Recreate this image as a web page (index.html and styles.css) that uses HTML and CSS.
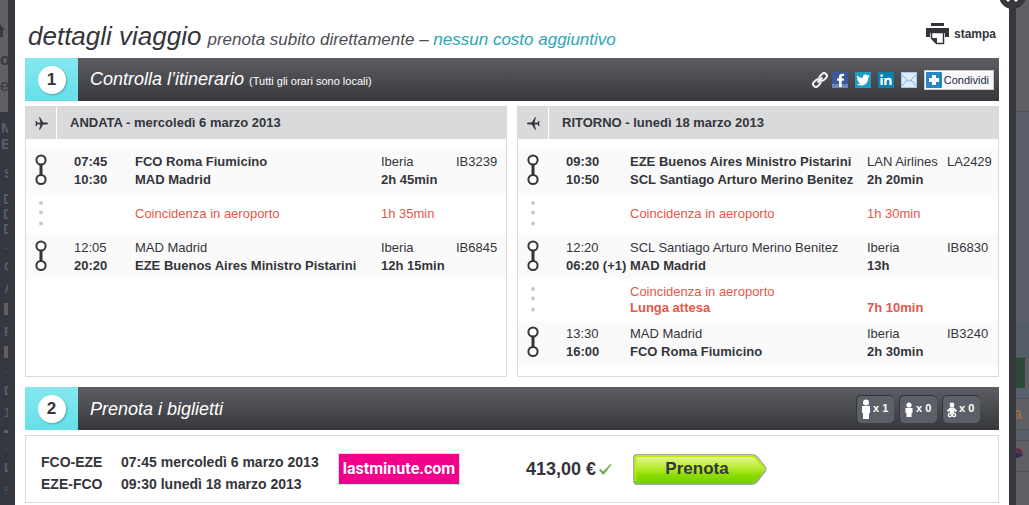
FILE: index.html
```
<!DOCTYPE html>
<html lang="it">
<head>
    <meta charset="UTF-8">
    <title>Dettagli viaggio</title>
    <link rel="stylesheet" href="styles.css">
</head>
<body>
<!-- shared icons -->
<svg class="defs" aria-hidden="true">
    <symbol id="leg" viewBox="0 0 12 32">
        <path d="M6 10v11" stroke="#34353b" stroke-width="3"/>
        <circle cx="6" cy="6" r="4.600" fill="#fff" stroke="#34353b" stroke-width="2"/>
        <circle cx="6" cy="25.500" r="4.600" fill="#fff" stroke="#34353b" stroke-width="2"/>
    </symbol>
    <symbol id="dots" viewBox="0 0 12 32">
        <g fill="#c9c9cb"><circle cx="6" cy="5" r="2"/><circle cx="6" cy="14.500" r="2"/><circle cx="6" cy="25.500" r="2"/></g>
    </symbol>
    <symbol id="plane" viewBox="0 0 13 13">
        <path d="M13 6.500c0-.5-.8-.9-2-.9H8.200L5 .3H4l1.500 5.300-2.800.2L1.300 4H.3l.7 2.500L.3 9h1l1.400-1.800 2.800.2L4 12.700h1l3.200-5.300H11c1.200 0 2-.4 2-.9z" fill="#34353b"/>
    </symbol>
</svg>

<div class="page">
    <div class="behind left">
        <div class="behind-top">
            <svg width="6" height="13" viewBox="0 0 6 13"><path d="M0 0l5 6H3v7H0z" fill="#38393f"/></svg>
            <b>o</b>
            <span>e</span>
        </div>
        <div class="behind-menu">
            <b class="name">M</b>
            <b class="name">E</b>
            <b class="head">S</b>
            <i class="check"></i>
            <i class="check"></i>
            <i class="check"></i>
            <hr>
            <b>C</b>
            <b>A</b>
            <i class="field"></i>
            <b>F</b>
            <i class="field"></i>
            <hr>
            <b>D</b>
            <b>1</b>
            <i class="slider"></i>
            <hr>
            <b>L</b>
            <span class="more">s</span>
        </div>
    </div>

    <div class="modal">
        <button class="close" aria-label="Chiudi">
            <svg width="12" height="12" viewBox="0 0 12 12"><path d="M1 1l10 10M11 1L1 11" stroke="#fff" stroke-width="3"/></svg>
        </button>

        <div class="top">
            <h1>dettagli viaggio</h1>
            <p>prenota subito direttamente – <em>nessun costo aggiuntivo</em></p>
            <a href="#" class="print">
                <svg width="23" height="22" viewBox="0 0 23 22">
                    <path d="M5 0h13v3H5zM0 5h23v9h-4v-4H4v4H0z" fill="#34353b"/>
                    <path d="M5.500 9.500h12v11h-7l-5-5z" fill="#fff" stroke="#34353b" stroke-width="1.500"/>
                    <path d="M5 15h6v6z" fill="#34353b"/>
                </svg>
                stampa
            </a>
        </div>

        <div class="bar">
            <div class="step"><span>1</span></div>
            <h2>Controlla l’itinerario <small>(Tutti gli orari sono locali)</small></h2>
            <div class="share">
                <a href="#" aria-label="Link">
                    <svg width="16" height="16" viewBox="0 0 16 16" fill="none" stroke="#f2f2f2" stroke-width="2">
                        <rect x="7.200" y="2" width="8" height="5.600" rx="2.800" transform="rotate(-45 11.200 4.800)"/>
                        <rect x=".8" y="8.400" width="8" height="5.600" rx="2.800" transform="rotate(-45 4.800 11.200)"/>
                        <path d="M5.500 10.500l5-5"/>
                    </svg>
                </a>
                <a href="#" aria-label="Facebook">
                    <svg width="16" height="16" viewBox="0 0 16 16">
                        <rect width="16" height="16" fill="#3b5a9b"/>
                        <path d="M0 12h16v4H0z" fill="#6d86bb"/>
                        <path d="M7 15V8.800H5V6.400h2V5c0-2.200 1.200-3.300 3.200-3.300H12V4h-1.200c-.8 0-1.100.4-1.100 1.100v1.300H12l-.3 2.400h-2V15z" fill="#fff"/>
                    </svg>
                </a>
                <a href="#" aria-label="Twitter">
                    <svg width="16" height="16" viewBox="0 0 16 16">
                        <rect width="16" height="16" fill="#1f9cc4"/>
                        <path d="M2 3.200c1.500 1.700 3.400 2.700 5.800 2.800C7.400 4 8.700 2.500 10.400 2.500c.8 0 1.500.3 2 .9l1.900-.7-1 1.700 1.500-.3-1.500 1.600c.1 4.500-3.100 7.800-7.300 7.800-1.700 0-3.200-.5-4.400-1.200 1.600.1 2.900-.3 3.900-1.100-1.300-.1-2.100-.8-2.500-1.900h1.100C2.800 8.900 2 7.900 2 6.400l1.200.4C2 5.900 1.700 4.500 2 3.200z" fill="#fff"/>
                    </svg>
                </a>
                <a href="#" aria-label="LinkedIn">
                    <svg width="16" height="16" viewBox="0 0 16 16">
                        <rect width="16" height="16" fill="#0d82b0"/>
                        <path d="M2.500 6h2.300v7H2.500zM2.500 2.500h2.300v2.200H2.500zM6.300 6h2.200v1c.5-.8 1.200-1.200 2.300-1.200 2 0 2.900 1.200 2.900 3.300V13h-2.300V9.400c0-1-.4-1.600-1.200-1.600-1 0-1.600.7-1.600 1.700V13H6.300z" fill="#fff"/>
                    </svg>
                </a>
                <a href="#" aria-label="Email">
                    <svg width="16" height="16" viewBox="0 0 16 16">
                        <rect x=".5" y=".5" width="15" height="15" fill="#dcecfb" stroke="#a3c6ee"/>
                        <path d="M1 3l7 6.500L15 3M1 14l5-6M15 14l-5-6" fill="none" stroke="#7dabdf"/>
                    </svg>
                </a>
                <button class="share-all">
                    <svg width="16" height="16" viewBox="0 0 16 16">
                        <rect width="16" height="16" rx="1" fill="#2186c1"/>
                        <path d="M6 3h4v3h3v4h-3v3H6v-3H3V6h3z" fill="#fff"/>
                    </svg>
                    Condividi
                </button>
            </div>
        </div>

        <div class="flights">
            <div class="flight">
                <h3><span class="plane"><svg width="13" height="13"><use href="#plane"/></svg></span>ANDATA - mercoledì 6 marzo 2013</h3>
                <table>
                    <colgroup><col class="c-icon"><col class="c-time"><col><col class="c-line"><col class="c-code"></colgroup>
                    <tbody class="leg">
                        <tr>
                            <td rowspan="2" class="mark"><svg width="12" height="32"><use href="#leg"/></svg></td>
                            <td class="b">07:45</td><td class="b">FCO Roma Fiumicino</td><td>Iberia</td><td>IB3239</td>
                        </tr>
                        <tr class="b"><td>10:30</td><td>MAD Madrid</td><td>2h 45min</td><td></td></tr>
                    </tbody>
                    <tbody class="wait">
                        <tr>
                            <td class="mark"><svg width="12" height="32"><use href="#dots"/></svg></td>
                            <td></td><td>Coincidenza in aeroporto</td><td>1h 35min</td><td></td>
                        </tr>
                    </tbody>
                    <tbody class="leg">
                        <tr>
                            <td rowspan="2" class="mark"><svg width="12" height="32"><use href="#leg"/></svg></td>
                            <td>12:05</td><td>MAD Madrid</td><td>Iberia</td><td>IB6845</td>
                        </tr>
                        <tr class="b"><td>20:20</td><td>EZE Buenos Aires Ministro Pistarini</td><td>12h 15min</td><td></td></tr>
                    </tbody>
                </table>
            </div>

            <div class="flight back">
                <h3><span class="plane"><svg width="13" height="13"><use href="#plane"/></svg></span>RITORNO - lunedì 18 marzo 2013</h3>
                <table>
                    <colgroup><col class="c-icon"><col class="c-time"><col><col class="c-line"><col class="c-code"></colgroup>
                    <tbody class="leg">
                        <tr>
                            <td rowspan="2" class="mark"><svg width="12" height="32"><use href="#leg"/></svg></td>
                            <td class="b">09:30</td><td class="b">EZE Buenos Aires Ministro Pistarini</td><td>LAN Airlines</td><td>LA2429</td>
                        </tr>
                        <tr class="b"><td>10:50</td><td>SCL Santiago Arturo Merino Benitez</td><td>2h 20min</td><td></td></tr>
                    </tbody>
                    <tbody class="wait">
                        <tr>
                            <td class="mark"><svg width="12" height="32"><use href="#dots"/></svg></td>
                            <td></td><td>Coincidenza in aeroporto</td><td>1h 30min</td><td></td>
                        </tr>
                    </tbody>
                    <tbody class="leg">
                        <tr>
                            <td rowspan="2" class="mark"><svg width="12" height="32"><use href="#leg"/></svg></td>
                            <td>12:20</td><td>SCL Santiago Arturo Merino Benitez</td><td>Iberia</td><td>IB6830</td>
                        </tr>
                        <tr class="b"><td>06:20 (+1)</td><td>MAD Madrid</td><td>13h</td><td></td></tr>
                    </tbody>
                    <tbody class="wait">
                        <tr>
                            <td class="mark"><svg width="12" height="32"><use href="#dots"/></svg></td>
                            <td></td><td>Coincidenza in aeroporto<br><b>Lunga attesa</b></td><td><br><b>7h 10min</b></td><td></td>
                        </tr>
                    </tbody>
                    <tbody class="leg">
                        <tr>
                            <td rowspan="2" class="mark"><svg width="12" height="32"><use href="#leg"/></svg></td>
                            <td>13:30</td><td>MAD Madrid</td><td>Iberia</td><td>IB3240</td>
                        </tr>
                        <tr class="b"><td>16:00</td><td>FCO Roma Fiumicino</td><td>2h 30min</td><td></td></tr>
                    </tbody>
                </table>
            </div>
        </div>

        <div class="bar">
            <div class="step"><span>2</span></div>
            <h2>Prenota i biglietti</h2>
            <ul class="people">
                <li>
                    <svg width="10" height="20" viewBox="0 0 10 20" fill="#fff"><circle cx="5" cy="3.500" r="3"/><path d="M1 7h8v7H8v6H2v-6H1z"/></svg>
                    <span>x 1</span>
                </li>
                <li>
                    <svg width="10" height="20" viewBox="0 0 10 20" fill="#fff"><circle cx="5" cy="6" r="2.600"/><path d="M1.500 9h7v5h-1v4h-5v-4h-1z"/></svg>
                    <span>x 0</span>
                </li>
                <li>
                    <svg width="10" height="20" viewBox="0 0 10 20" fill="#fff"><circle cx="5" cy="6" r="2.400"/><path d="M3 8.500h4l3 3-1 1.500-2-1v2H3v-2l-2 1-1-1.500z"/><circle cx="3" cy="16" r="1.600" fill="none" stroke="#fff" stroke-width="1.400"/><circle cx="7" cy="16" r="1.600" fill="none" stroke="#fff" stroke-width="1.400"/></svg>
                    <span>x 0</span>
                </li>
            </ul>
        </div>

        <div class="ticket">
            <dl>
                <dt>FCO-EZE</dt><dd>07:45 mercoledì 6 marzo 2013</dd>
                <dt>EZE-FCO</dt><dd>09:30 lunedì 18 marzo 2013</dd>
            </dl>
            <div class="seller"><span>lastminute.com</span></div>
            <div class="price">
                413,00 €
                <svg width="13" height="11" viewBox="0 0 13 11"><path d="M0 6l2-1 2 2.500L11.500 0l1 .5L5 10.500H3.500z" fill="#73b04e"/></svg>
            </div>
            <button class="book">
                <svg width="134" height="31" viewBox="0 0 134 31" aria-hidden="true">
                    <linearGradient id="green" x2="0" y2="1">
                        <stop offset="0" stop-color="#e4f79a"/>
                        <stop offset=".45" stop-color="#b9ec30"/>
                        <stop offset=".7" stop-color="#8bdb00"/>
                        <stop offset="1" stop-color="#72cf00"/>
                    </linearGradient>
                    <path d="M4 .7h115q3 0 5 2l8 10q1.500 2.500 0 5l-8 10q-2 2.600-5 2.600H4q-3.300 0-3.300-3.300V4Q.7.7 4 .7z" fill="url(#green)" stroke="#a3a8ae" stroke-width="1.400"/>
                    <path d="M2.500 27V4q0-1.800 2-1.800H119q2.500 0 4 1.800l7 9" fill="none" stroke="#bfea00" stroke-width="1.800"/>
                </svg>
                <span>Prenota</span>
            </button>
        </div>
    </div>

    <div class="behind right">
        <div class="r-top"></div>
        <div class="r-blue"></div>
        <div class="r-slate"></div>
        <div class="r-green"></div>
        <div class="r-line"></div>
        <div class="r-row"><b>a</b></div>
        <div class="r-line"></div>
        <div class="r-row"><svg width="8" height="12" viewBox="0 0 8 12"><path d="M0 1q6 0 7 6L0 4z" fill="#6b2740"/><path d="M0 5l7 2q-2 4-7 4z" fill="#2a3158"/></svg></div>
    </div>
</div>
</body>
</html>
```
FILE: styles.css
```
body, h1, h2, h3, p, ul, dl, dd {
    margin: 0;
    padding: 0;
    list-style: none;
}

body {
    font: 13px/18px "Liberation Sans", Arial, sans-serif;
    color: #34353b;
    background: #5f5f64;
}

a {
    color: inherit;
    text-decoration: none;
}

button {
    font-family: inherit;
    color: inherit;
    cursor: pointer;
}

svg {
    display: block;
    flex: none;
}

.defs {
    position: absolute;
    width: 0;
    height: 0;
}

.b {
    font-weight: bold;
}

.page {
    display: flex;
    height: 100vh;
    overflow: hidden;
}

/* page under the overlay */
.behind {
    flex: none;
    overflow: hidden;
    display: flex;
    flex-direction: column;
}

.left {
    width: 8px;
}

.behind-top {
    box-sizing: border-box;
    height: 112px;
    flex: none;
    padding-top: 24px;
    background: #5f5f64;
    color: #38393f;
    font-size: 16px;
}

.behind-top b, .behind-top span {
    display: block;
    height: 26px;
    line-height: 46px;
}

.behind-menu {
    flex: 1;
    padding: 8px 0 0 4px;
    background: #353740;
    color: #5b5d65;
}

.behind-menu b, .behind-menu span, .behind-menu i {
    display: block;
    height: 16px;
    line-height: 16px;
    margin-bottom: 6px;
}

.behind-menu .name {
    margin: 0 0 0 -3px;
    font-size: 15px;
}

.behind-menu .head {
    margin: 14px 0 12px;
}

.behind-menu .check {
    box-sizing: border-box;
    width: 9px;
    height: 10px;
    margin-bottom: 5px;
    border: 2px solid #4c5d70;
}

.behind-menu .field {
    width: 6px;
    height: 12px;
    margin: 4px 0 9px;
    background: #5f5f64;
}

.behind-menu .slider {
    width: 6px;
    height: 3px;
    margin: 9px 0 16px;
    background: #5f5f64;
}

.behind-menu hr {
    margin: 14px 0 10px;
    border: 0;
    border-top: 1px solid #42444c;
}

.behind-menu .more {
    color: #365964;
}

.right {
    width: 13px;
}

.right div {
    box-sizing: border-box;
    flex: none;
    border-bottom: 1px solid #4f5057;
}

.right .r-top {
    height: 112px;
}

.right .r-blue {
    height: 211px;
    background: #5b5e68;
    border: 0;
}

.right .r-slate {
    height: 35px;
    background: #555d66;
}

.right .r-green {
    width: 9px;
    height: 30px;
    background: #2b4a3b;
    border: 0;
}

.right .r-line {
    height: 11px;
    background: #58616b;
}

.right .r-row {
    height: 31px;
    padding-top: 6px;
}

.r-row b {
    color: #93704c;
    font-size: 16px;
    margin-left: -3px;
}

.modal {
    position: relative;
    flex: 1;
    padding: 0 10px;
    background: #fff;
    border: solid #37383d;
    border-width: 0 7px;
}

.close {
    position: absolute;
    top: -18px;
    right: -17px;
    width: 27px;
    height: 27px;
    padding: 7px;
    border: 0;
    border-radius: 50%;
    background: #37383d;
}

.top {
    display: flex;
    align-items: baseline;
    height: 42px;
    padding: 16px 3px 0;
}

h1 {
    font: italic 26px/40px "Liberation Sans", Arial, sans-serif;
}

.top p {
    margin-left: 6px;
    font-size: 17px;
    font-style: italic;
    color: #4c4d54;
}

.top em {
    color: #2aa5b8;
}

.print {
    display: flex;
    align-items: center;
    gap: 5px;
    margin-left: auto;
    font-size: 12px;
    font-weight: bold;
}

.bar {
    display: flex;
    align-items: center;
    height: 43px;
    color: #fff;
    background: linear-gradient(#5d5e63, #37383c);
}

.step {
    display: flex;
    align-items: center;
    justify-content: center;
    width: 53px;
    height: 43px;
    background: linear-gradient(#86e8f0, #65dfe9);
}

.step span {
    width: 28px;
    height: 28px;
    border-radius: 50%;
    background: #fff;
    box-shadow: 1px 1px 2px #4aa9b3;
    color: #34353b;
    font-size: 17px;
    font-weight: bold;
    line-height: 28px;
    text-align: center;
}

h2 {
    flex: 1;
    padding-left: 12px;
    font-size: 18px;
    font-style: italic;
    font-weight: normal;
}

h2 small {
    font-size: 11px;
    font-style: normal;
}

.share {
    display: flex;
    align-items: center;
    gap: 7px;
    padding-right: 5px;
}

.share a:first-child {
    margin-right: -3px;
}

.share-all {
    display: flex;
    align-items: center;
    gap: 2px;
    height: 20px;
    padding: 0 4px 0 1px;
    border: 1px solid #c9c9cb;
    background: #f8f8f8;
    color: #222a44;
    font-size: 11px;
}

.flights {
    display: grid;
    grid-template-columns: 1fr 1fr;
    gap: 10px;
    margin: 5px 0 10px;
}

.flight {
    padding-bottom: 11px;
    border: 1px solid #d9dadc;
}

h3 {
    display: flex;
    align-items: center;
    gap: 13px;
    height: 32px;
    margin-bottom: 10px;
    background: #d9dadc;
    font-size: 13px;
}

.plane {
    display: flex;
    align-items: center;
    height: 32px;
    padding: 0 8px 0 9px;
    border-right: 1px solid #fff;
}

.back .plane svg {
    transform: scaleX(-1);
}

table {
    width: 100%;
    table-layout: fixed;
    border-collapse: collapse;
}

td {
    padding: 0;
    white-space: nowrap;
}

.c-icon {
    width: 48px;
}

.c-time {
    width: 61px;
}

.c-line {
    width: 75px;
}

.c-code {
    width: 50px;
}

.back .c-time {
    width: 64px;
}

.back .c-line {
    width: 80px;
}

.back .c-code {
    width: 51px;
}

.leg {
    background: #fafafa;
}

.leg tr:first-child td {
    padding-top: 4px;
}

.leg tr:last-child td {
    padding-bottom: 4px;
}

.leg tr:first-child .mark {
    padding: 0 0 2px 9px;
}

.wait {
    color: #e4574b;
    line-height: 16px;
}

.wait td {
    height: 42px;
}

.wait .mark {
    padding-left: 9px;
}

.people {
    display: flex;
    gap: 5px;
    padding-right: 19px;
}

.people li {
    display: flex;
    align-items: center;
    gap: 2px;
    box-sizing: border-box;
    width: 38px;
    height: 28px;
    padding-left: 4px;
    border: solid #333439;
    border-width: 1px 0 0 1px;
    border-radius: 5px;
    background: #5d6068;
    font-size: 11px;
    font-weight: bold;
    white-space: nowrap;
}

.people span {
    padding-bottom: 3px;
}

.ticket {
    display: grid;
    grid-template-columns: 297px 188px 107px auto;
    align-items: center;
    justify-content: start;
    height: 66px;
    margin-top: 5px;
    padding-left: 15px;
    border: 1px solid #d9dadc;
}

dl {
    display: grid;
    grid-template-columns: 80px auto;
    padding-top: 8px;
    font-size: 14px;
    font-weight: bold;
    line-height: 22px;
}

.seller span {
    display: inline-block;
    box-sizing: border-box;
    width: 122px;
    height: 32px;
    border: 1px solid #d9dadc;
    background: #f2008b;
    color: #fff;
    font: bold 16px/30px Roboto, sans-serif;
    text-align: center;
}

.price {
    display: flex;
    align-items: center;
    gap: 3px;
    font-size: 18px;
    font-weight: bold;
}

.book {
    display: grid;
    padding: 0;
    border: 0;
    background: none;
    font-size: 17px;
    font-weight: bold;
}

.book svg, .book span {
    grid-area: 1 / 1;
}

.book span {
    padding-right: 6px;
    line-height: 30px;
}
```
